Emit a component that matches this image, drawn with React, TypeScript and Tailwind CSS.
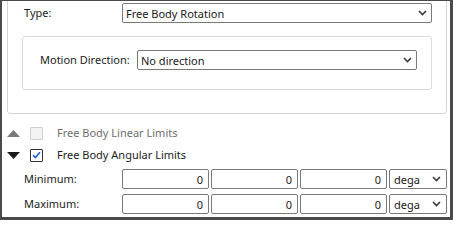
import React from "react";

function Chevron() {
  return (
    <svg width="9" height="6" viewBox="0 0 9 6" className="shrink-0">
      <path d="M1 1 L4.5 4.5 L8 1" fill="none" stroke="#3a3a3a" strokeWidth="1.6" />
    </svg>
  );
}

function Select({ value, w }: { value: string; w: string }) {
  return (
    <div
      className={`${w} shrink-0 h-[20px] flex items-center justify-between border border-[#7a7a7a] rounded-[2px] bg-white pl-[3px] pr-[4px] text-[#1a1a1a]`}
    >
      <span className="leading-none whitespace-nowrap">{value}</span>
      <Chevron />
    </div>
  );
}

function NumInput() {
  return (
    <div className="w-[87px] shrink-0 h-[20px] flex items-center justify-end border border-[#7a7a7a] rounded-[2px] bg-white pr-[5px] text-[#2a2218]">
      <span className="leading-none">0</span>
    </div>
  );
}

function UnitSelect() {
  return (
    <div className="w-[58px] shrink-0 h-[20px] flex items-center justify-between border border-[#7a7a7a] rounded-[2px] bg-white pl-[4px] pr-[5px] text-[#1a1a1a]">
      <span className="leading-none">dega</span>
      <Chevron />
    </div>
  );
}

export default function App() {
  return (
    <div className="w-[453px] h-[220px] overflow-hidden bg-white border-t border-l-2 border-r-[3px] border-b-[3px] border-[#4a4a4a] font-['Noto_Sans',sans-serif] text-[11px] text-[#1c1c1c]">
      {/* Upper panel (scrolled partially out of view) */}
      <div className="ml-[5px] -mt-[10px] w-[440px] h-[123px] border border-[#d6d6d6] rounded-b-[3px] pt-[11px]">
        <div className="flex items-center">
          <div className="w-[114px] shrink-0 pl-[16px] whitespace-nowrap">Type:</div>
          <Select value="Free Body Rotation" w="w-[310px]" />
        </div>
        <div className="ml-[14px] mt-[13px] w-[410px] h-[54px] border border-[#dadada] rounded-[3px] pt-[13px]">
          <div className="flex items-center">
            <div className="w-[114px] shrink-0 pl-[17px] whitespace-nowrap">Motion Direction:</div>
            <Select value="No direction" w="w-[280px]" />
          </div>
        </div>
      </div>

      {/* Lower section */}
      <div className="mt-[8px]">
        <div className="h-[22px] flex items-center pl-[5px]">
          <svg width="13" height="7" viewBox="0 0 13 7" className="shrink-0">
            <path d="M0 7 L6.5 0 L13 7 Z" fill="#7a7a7a" />
          </svg>
          <div className="ml-[10px] w-[13px] h-[13px] border border-[#d0d0d0] bg-[#f3f3f3] rounded-[1px]" />
          <div className="ml-[14px] text-[#6e6e6e]">Free Body Linear Limits</div>
        </div>
        <div className="h-[22px] flex items-center pl-[5px]">
          <svg width="13" height="7" viewBox="0 0 13 7" className="shrink-0">
            <path d="M0 0 L13 0 L6.5 7 Z" fill="#1a1a1a" />
          </svg>
          <div className="ml-[10px] w-[13px] h-[13px] border border-[#333333] bg-white rounded-[1px] flex items-center justify-center">
            <svg width="9" height="8" viewBox="0 0 9 8">
              <path d="M1 4.2 L3.4 6.5 L8 1.2" fill="none" stroke="#1f5fd6" strokeWidth="1.6" />
            </svg>
          </div>
          <div className="ml-[14px] text-[#1c1c1c]">Free Body Angular Limits</div>
        </div>

        <div className="mt-[3px] flex items-center">
          <div className="w-[120px] shrink-0 pl-[22px]">Minimum:</div>
          <div className="flex gap-[2px]">
            <NumInput />
            <NumInput />
            <NumInput />
            <UnitSelect />
          </div>
        </div>
        <div className="mt-[5px] flex items-center">
          <div className="w-[120px] shrink-0 pl-[22px]">Maximum:</div>
          <div className="flex gap-[2px]">
            <NumInput />
            <NumInput />
            <NumInput />
            <UnitSelect />
          </div>
        </div>
      </div>
    </div>
  );
}
